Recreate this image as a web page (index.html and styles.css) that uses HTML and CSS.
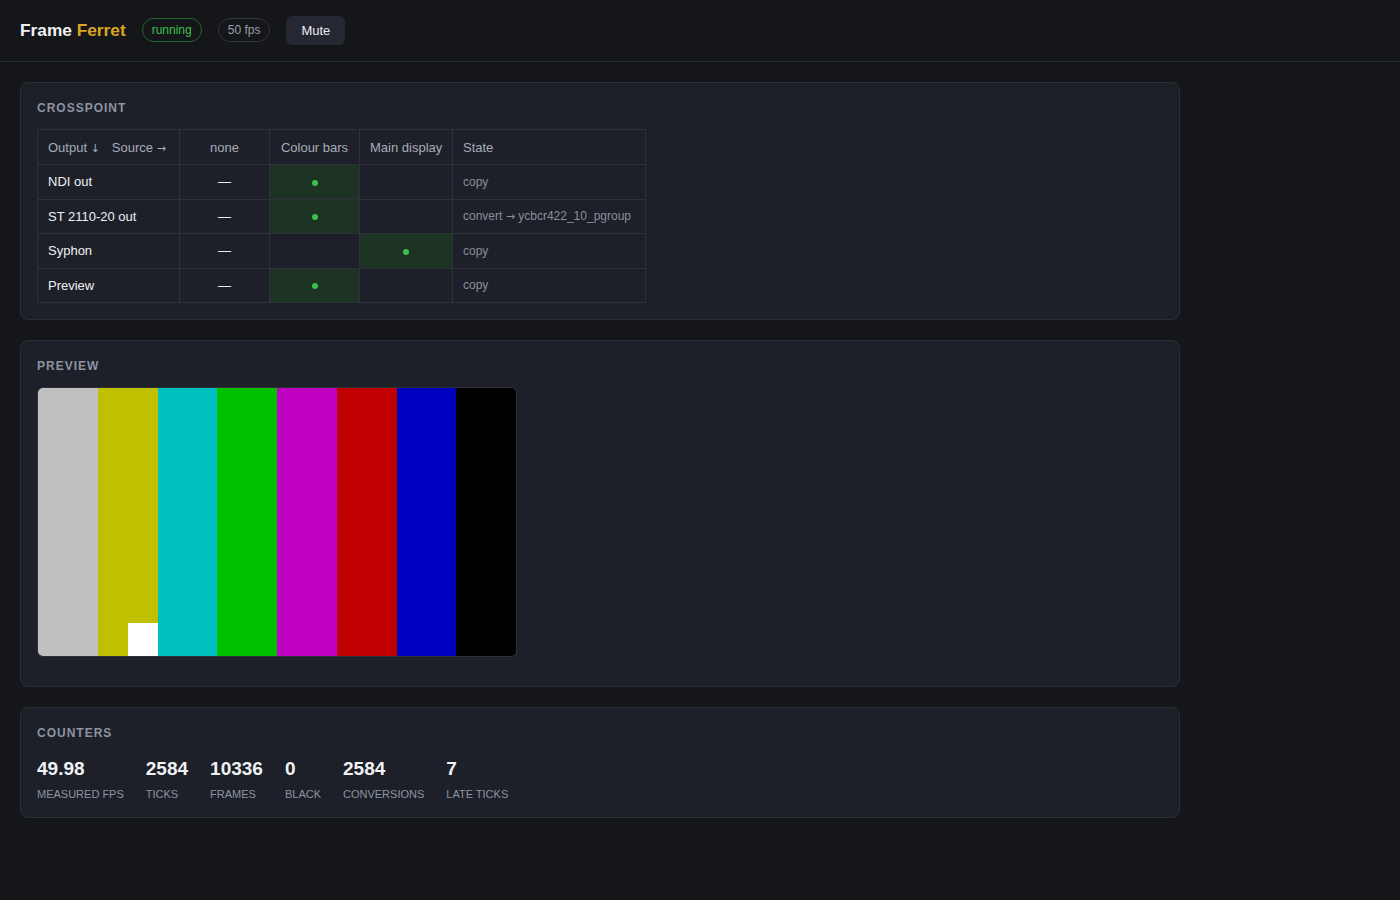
FILE: index.html
```html
<!DOCTYPE html>
<html>
<head>
<meta charset="utf-8">
<title>Frame Ferret</title>
<link rel="stylesheet" href="styles.css">
</head>
<body>
<header class="topbar">
  <h1 class="brand"><span class="brand-a">Frame</span> <span class="brand-b">Ferret</span></h1>
  <span class="pill pill-ok">running</span>
  <span class="pill">50 fps</span>
  <button class="btn">Mute</button>
</header>
<main class="main">
  <section class="card">
    <h2 class="card-title">CROSSPOINT</h2>
    <table class="xp">
      <colgroup>
        <col class="c1"><col class="c2"><col class="c3"><col class="c4"><col class="c5">
      </colgroup>
      <thead>
        <tr>
          <th class="corner"><span>Output <span class="arr">↓</span></span><span class="src">Source <span class="arr">→</span></span></th>
          <th class="mid">none</th>
          <th class="mid">Colour bars</th>
          <th class="mid">Main display</th>
          <th class="left">State</th>
        </tr>
      </thead>
      <tbody>
        <tr>
          <td class="out">NDI out</td>
          <td class="mid dash">—</td>
          <td class="mid on"><span class="dot"></span></td>
          <td class="mid"></td>
          <td class="state">copy</td>
        </tr>
        <tr>
          <td class="out">ST 2110-20 out</td>
          <td class="mid dash">—</td>
          <td class="mid on"><span class="dot"></span></td>
          <td class="mid"></td>
          <td class="state">convert <span class="arr">→</span> ycbcr422_10_pgroup</td>
        </tr>
        <tr>
          <td class="out">Syphon</td>
          <td class="mid dash">—</td>
          <td class="mid"></td>
          <td class="mid on"><span class="dot"></span></td>
          <td class="state">copy</td>
        </tr>
        <tr>
          <td class="out">Preview</td>
          <td class="mid dash">—</td>
          <td class="mid on"><span class="dot"></span></td>
          <td class="mid"></td>
          <td class="state">copy</td>
        </tr>
      </tbody>
    </table>
  </section>

  <section class="card card-preview">
    <h2 class="card-title">PREVIEW</h2>
    <div class="screen">
      <div class="bar b-grey"></div>
      <div class="bar b-yellow">
        <div class="bar-top"></div>
        <div class="bar-bottom"><div class="half"></div><div class="half white"></div></div>
      </div>
      <div class="bar b-cyan"></div>
      <div class="bar b-green"></div>
      <div class="bar b-magenta"></div>
      <div class="bar b-red"></div>
      <div class="bar b-blue"></div>
      <div class="bar b-black"></div>
    </div>
  </section>

  <section class="card">
    <h2 class="card-title card-title-counters">COUNTERS</h2>
    <div class="counters">
      <div class="counter"><div class="val">49.98</div><div class="lbl">MEASURED FPS</div></div>
      <div class="counter"><div class="val">2584</div><div class="lbl">TICKS</div></div>
      <div class="counter"><div class="val">10336</div><div class="lbl">FRAMES</div></div>
      <div class="counter"><div class="val">0</div><div class="lbl">BLACK</div></div>
      <div class="counter"><div class="val">2584</div><div class="lbl">CONVERSIONS</div></div>
      <div class="counter"><div class="val">7</div><div class="lbl">LATE TICKS</div></div>
    </div>
  </section>
</main>
</body>
</html>
```

FILE: styles.css
```css
* { box-sizing: border-box; }
html, body { margin: 0; padding: 0; }
body {
  background: #15161a;
  color: #e6e8ec;
  font-family: "Liberation Sans", Arial, sans-serif;
  font-size: 13px;
}
.topbar {
  display: flex;
  align-items: center;
  gap: 16px;
  height: 62px;
  padding: 0 20px 1px 20px;
  border-bottom: 1px solid #2a2d35;
}
.brand {
  margin: 0;
  font-size: 17.3px;
  font-weight: 700;
  line-height: 20px;
}
.brand-a { color: #f0f1f3; }
.brand-b { color: #dba621; }
.pill {
  display: inline-flex;
  align-items: center;
  height: 24px;
  padding: 0 9px;
  border-radius: 12px;
  border: 1px solid #30333c;
  color: #9a9fab;
  font-size: 12px;
}
.pill-ok {
  border-color: #1f6a2c;
  color: #3cc14e;
}
.btn {
  height: 29px;
  padding: 0 15px;
  border: none;
  border-radius: 6px;
  background: #252833;
  color: #e8eaee;
  font-family: inherit;
  font-size: 13px;
}
.main {
  padding: 20px;
  display: flex;
  flex-direction: column;
  gap: 20px;
}
.card {
  width: 1160px;
  background: #1d2029;
  border: 1px solid #2b2e37;
  border-radius: 8px;
  padding: 16px;
}
.card-title {
  margin: 1px 0 13px 0;
  font-size: 12px;
  line-height: 16px;
  font-weight: 700;
  letter-spacing: 1px;
  color: #8d93a0;
}
.xp {
  border-collapse: collapse;
  table-layout: fixed;
  width: 608px;
}
.c1 { width: 142px; }
.c2 { width: 90px; }
.c3 { width: 90px; }
.c4 { width: 93px; }
.c5 { width: 193px; }
.xp th, .xp td {
  border: 1px solid #2e313a;
  height: 34.5px;
  padding: 0 10px;
  font-size: 13px;
  white-space: nowrap;
}
.xp th {
  height: 35px;
  font-weight: 400;
  color: #a7acb8;
}
.corner { text-align: left; }
.src { margin-left: 12px; }
.arr {
  font-family: "DejaVu Sans", sans-serif;
  font-size: 11px;
}
.mid { text-align: center; }
.left { text-align: left; }
.out { color: #eef0f3; }
.dash { color: #e8eaee; }
.on { background: #1d3425; }
.dot {
  display: inline-block;
  width: 6px;
  height: 6px;
  border-radius: 50%;
  background: #3cc14e;
  vertical-align: middle;
}
.xp td.state {
  color: #8a8f9b;
  font-size: 12px;
}
.card-preview { padding-bottom: 29px; }
.screen {
  display: flex;
  width: 480px;
  height: 270px;
  border: 1px solid #2e313a;
  border-radius: 6px;
  overflow: hidden;
}
.bar { flex: 1; }
.b-grey { background: #c0c0c0; }
.b-yellow { background: #c0c000; display: flex; flex-direction: column; }
.bar-top { flex: 7; }
.bar-bottom { flex: 1; display: flex; }
.half { flex: 1; }
.white { background: #ffffff; }
.b-cyan { background: #00c0c0; }
.b-green { background: #00c000; }
.b-magenta { background: #c000c0; }
.b-red { background: #c00000; }
.b-blue { background: #0000c0; }
.b-black { background: #000000; }
.card-title-counters { margin-bottom: 17px; }
.counters {
  display: flex;
  gap: 22px;
}
.val {
  font-size: 19px;
  line-height: 22px;
  font-weight: 700;
  color: #f0f1f3;
}
.lbl {
  margin-top: 7px;
  font-size: 11px;
  line-height: 14px;
  color: #8d93a0;
}
```
